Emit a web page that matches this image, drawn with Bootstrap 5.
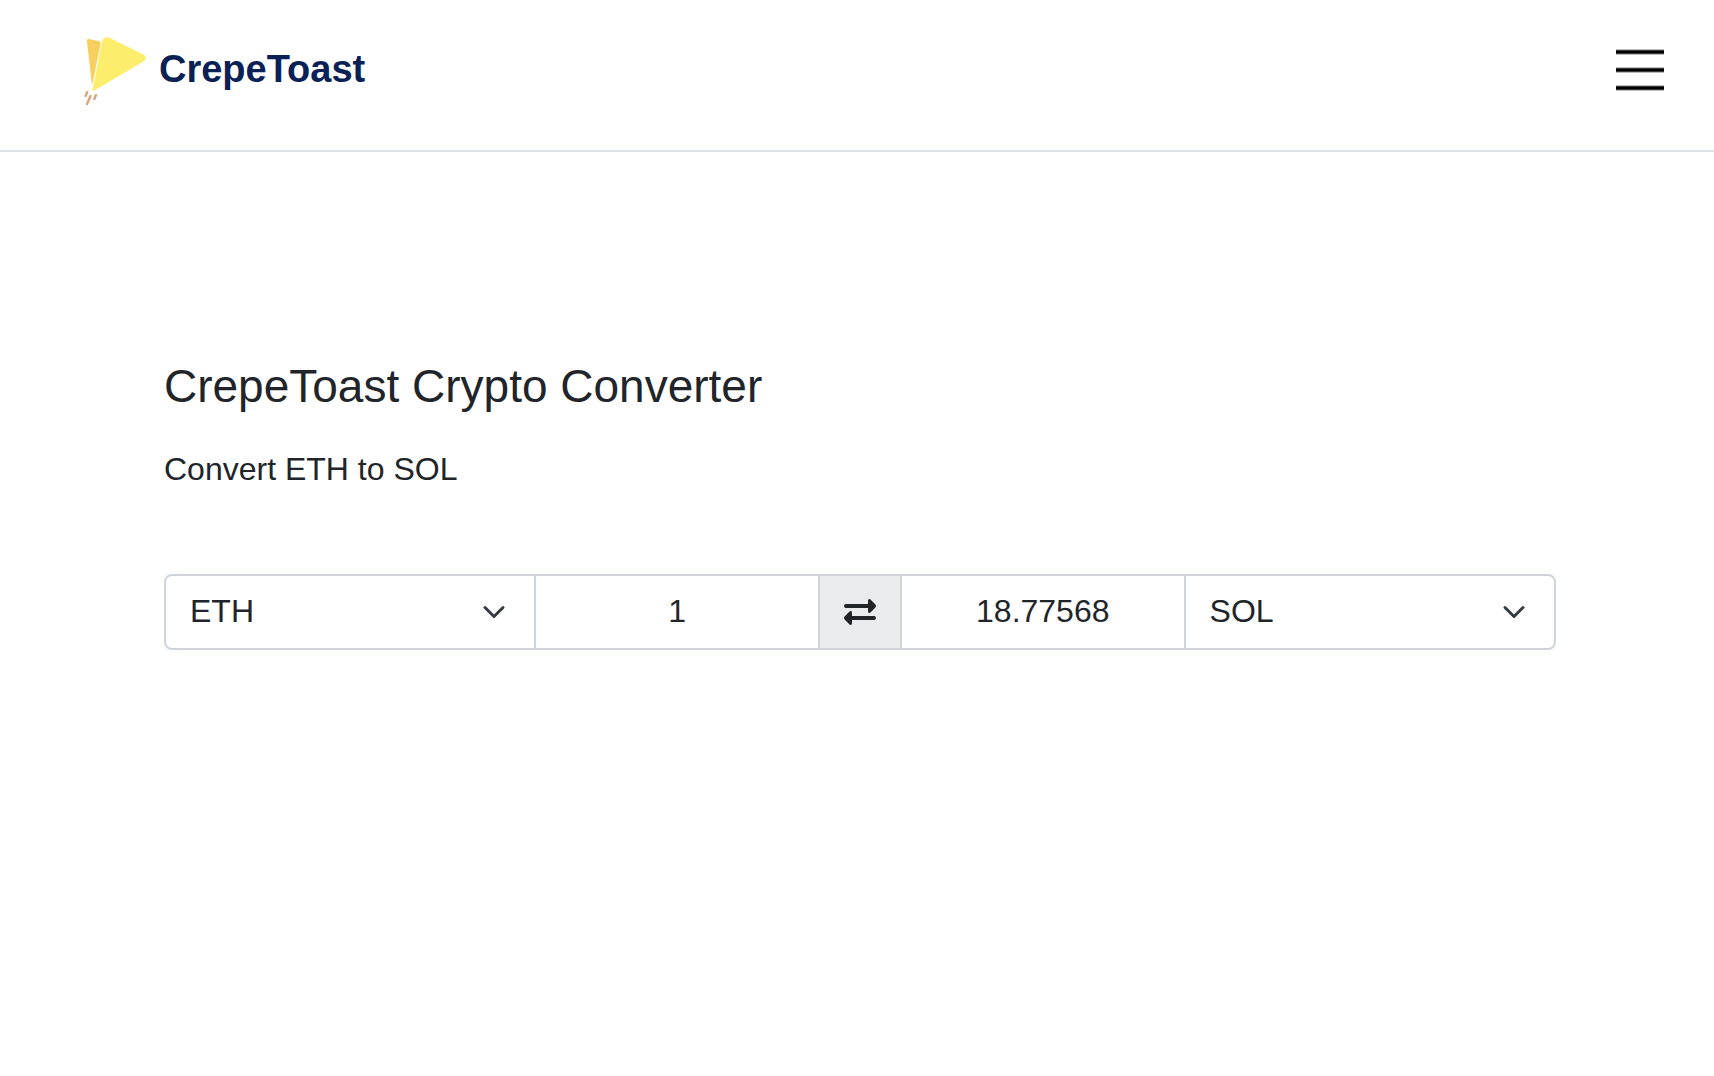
<!DOCTYPE html>
<html lang="en">
<head>
<meta charset="utf-8">
<meta name="viewport" content="width=device-width, initial-scale=1">
<title>CrepeToast Crypto Converter</title>
<link href="https://cdn.jsdelivr.net/npm/bootstrap@5.3.0/dist/css/bootstrap.min.css" rel="stylesheet">
<style>
body { font-family: "Liberation Sans", Arial, sans-serif; font-size: 32px; line-height: 48px; color: #212529; }
.site-header { border-bottom: 2px solid #dee2e6; padding: 30px 42px 40px 80px; }
.brand-link { color: #0a2156; font-size: 38px; line-height: 48px; font-weight: 700; gap: 9px; }
.brand-name { padding-bottom: 2px; }
.menu-btn { padding: 0 8px; border: 0; }
.converter { padding: 206px 158px 0 164px; }
.converter-title { font-size: 46px; line-height: 56px; margin-bottom: 31px; }
.converter-lead { margin-bottom: 81px; }
.converter-group .form-select,
.converter-group .form-control,
.converter-group .swap-btn { border: 2px solid #ced4da; font-size: 32px; line-height: 48px; color: #212529; height: 76px; }
.converter-group { flex-wrap: nowrap; }
.converter-group .form-select { flex: 7 1 0; padding: 11px 72px 13px 24px; background-size: 32px 24px; background-position: right 24px center; border-radius: 8px; }
.converter-group .form-control { flex: 6 1 0; padding: 11px 24px 13px; text-align: center; }
.converter-group .swap-btn { flex: 0 0 84px; padding: 0; background: #e9ebef; }
.converter-group > :not(:first-child) { margin-left: -2px !important; }
</style>
<script src="https://cdn.jsdelivr.net/npm/bootstrap@5.3.0/dist/js/bootstrap.bundle.min.js" defer></script>
</head>
<body>
<header class="site-header d-flex justify-content-between align-items-center">
  <a class="brand-link d-flex align-items-center text-decoration-none" href="#">
    <svg width="70" height="80" viewBox="80 30 70 80" aria-hidden="true">
      <path d="M88.500 39 L99 41 Q101 41.500 100.500 44 L92 86 L87 41 Q86.700 38.800 88.500 39Z" fill="#f8cf5e"/>
      <path d="M102 41 Q104 35.500 110 38 L143.500 54.500 Q148.500 58 143.500 61.500 L93.500 91Q92.300 91.500 92.600 90Z" fill="#fcee6c"/>
      <path d="M87.300 92 L85.500 96M90.500 96 L87 104M96 95 L94.300 99" fill="none" stroke="#d9a57c" stroke-width="2.400" stroke-linecap="round"/>
    </svg>
    <span class="brand-name">CrepeToast</span>
  </a>
  <button class="btn menu-btn" type="button" aria-label="Open menu">
    <svg class="d-block" width="48" height="42" viewBox="0 0 48 42" aria-hidden="true"><path d="M0 3H48M0 21H48M0 39H48" stroke="#777" stroke-width="5"/><path d="M0 3H48M0 21H48M0 39H48" stroke="#000" stroke-width="3"/></svg>
  </button>
</header>
<main class="converter">
  <h1 class="converter-title fw-normal">CrepeToast Crypto Converter</h1>
  <p class="converter-lead">Convert ETH to SOL</p>
  <form class="input-group converter-group">
    <select class="form-select" aria-label="From currency"><option selected>ETH</option><option>SOL</option></select>
    <input class="form-control" type="text" inputmode="decimal" value="1" aria-label="Amount to convert">
    <button class="btn swap-btn d-flex align-items-center justify-content-center" type="button" aria-label="Swap currencies">
      <svg width="32" height="26" viewBox="0 0 32 26" aria-hidden="true">
        <path d="M2 7H27M5 19H30" fill="none" stroke="#212529" stroke-width="4" stroke-linecap="round"/>
        <path d="M24 2Q24 -.800 26.500 .500L31.400 5.500Q32.500 7 31.400 8.500L26.500 13.500Q24 14.800 24 12ZM8 14Q8 11.200 5.500 12.500L.600 17.500Q-.500 19 .600 20.500L5.500 25.500Q8 26.800 8 24Z" fill="#212529"/>
      </svg>
    </button>
    <input class="form-control" type="text" value="18.77568" aria-label="Converted amount" readonly>
    <select class="form-select" aria-label="To currency"><option selected>SOL</option><option>ETH</option></select>
  </form>
</main>
</body>
</html>
